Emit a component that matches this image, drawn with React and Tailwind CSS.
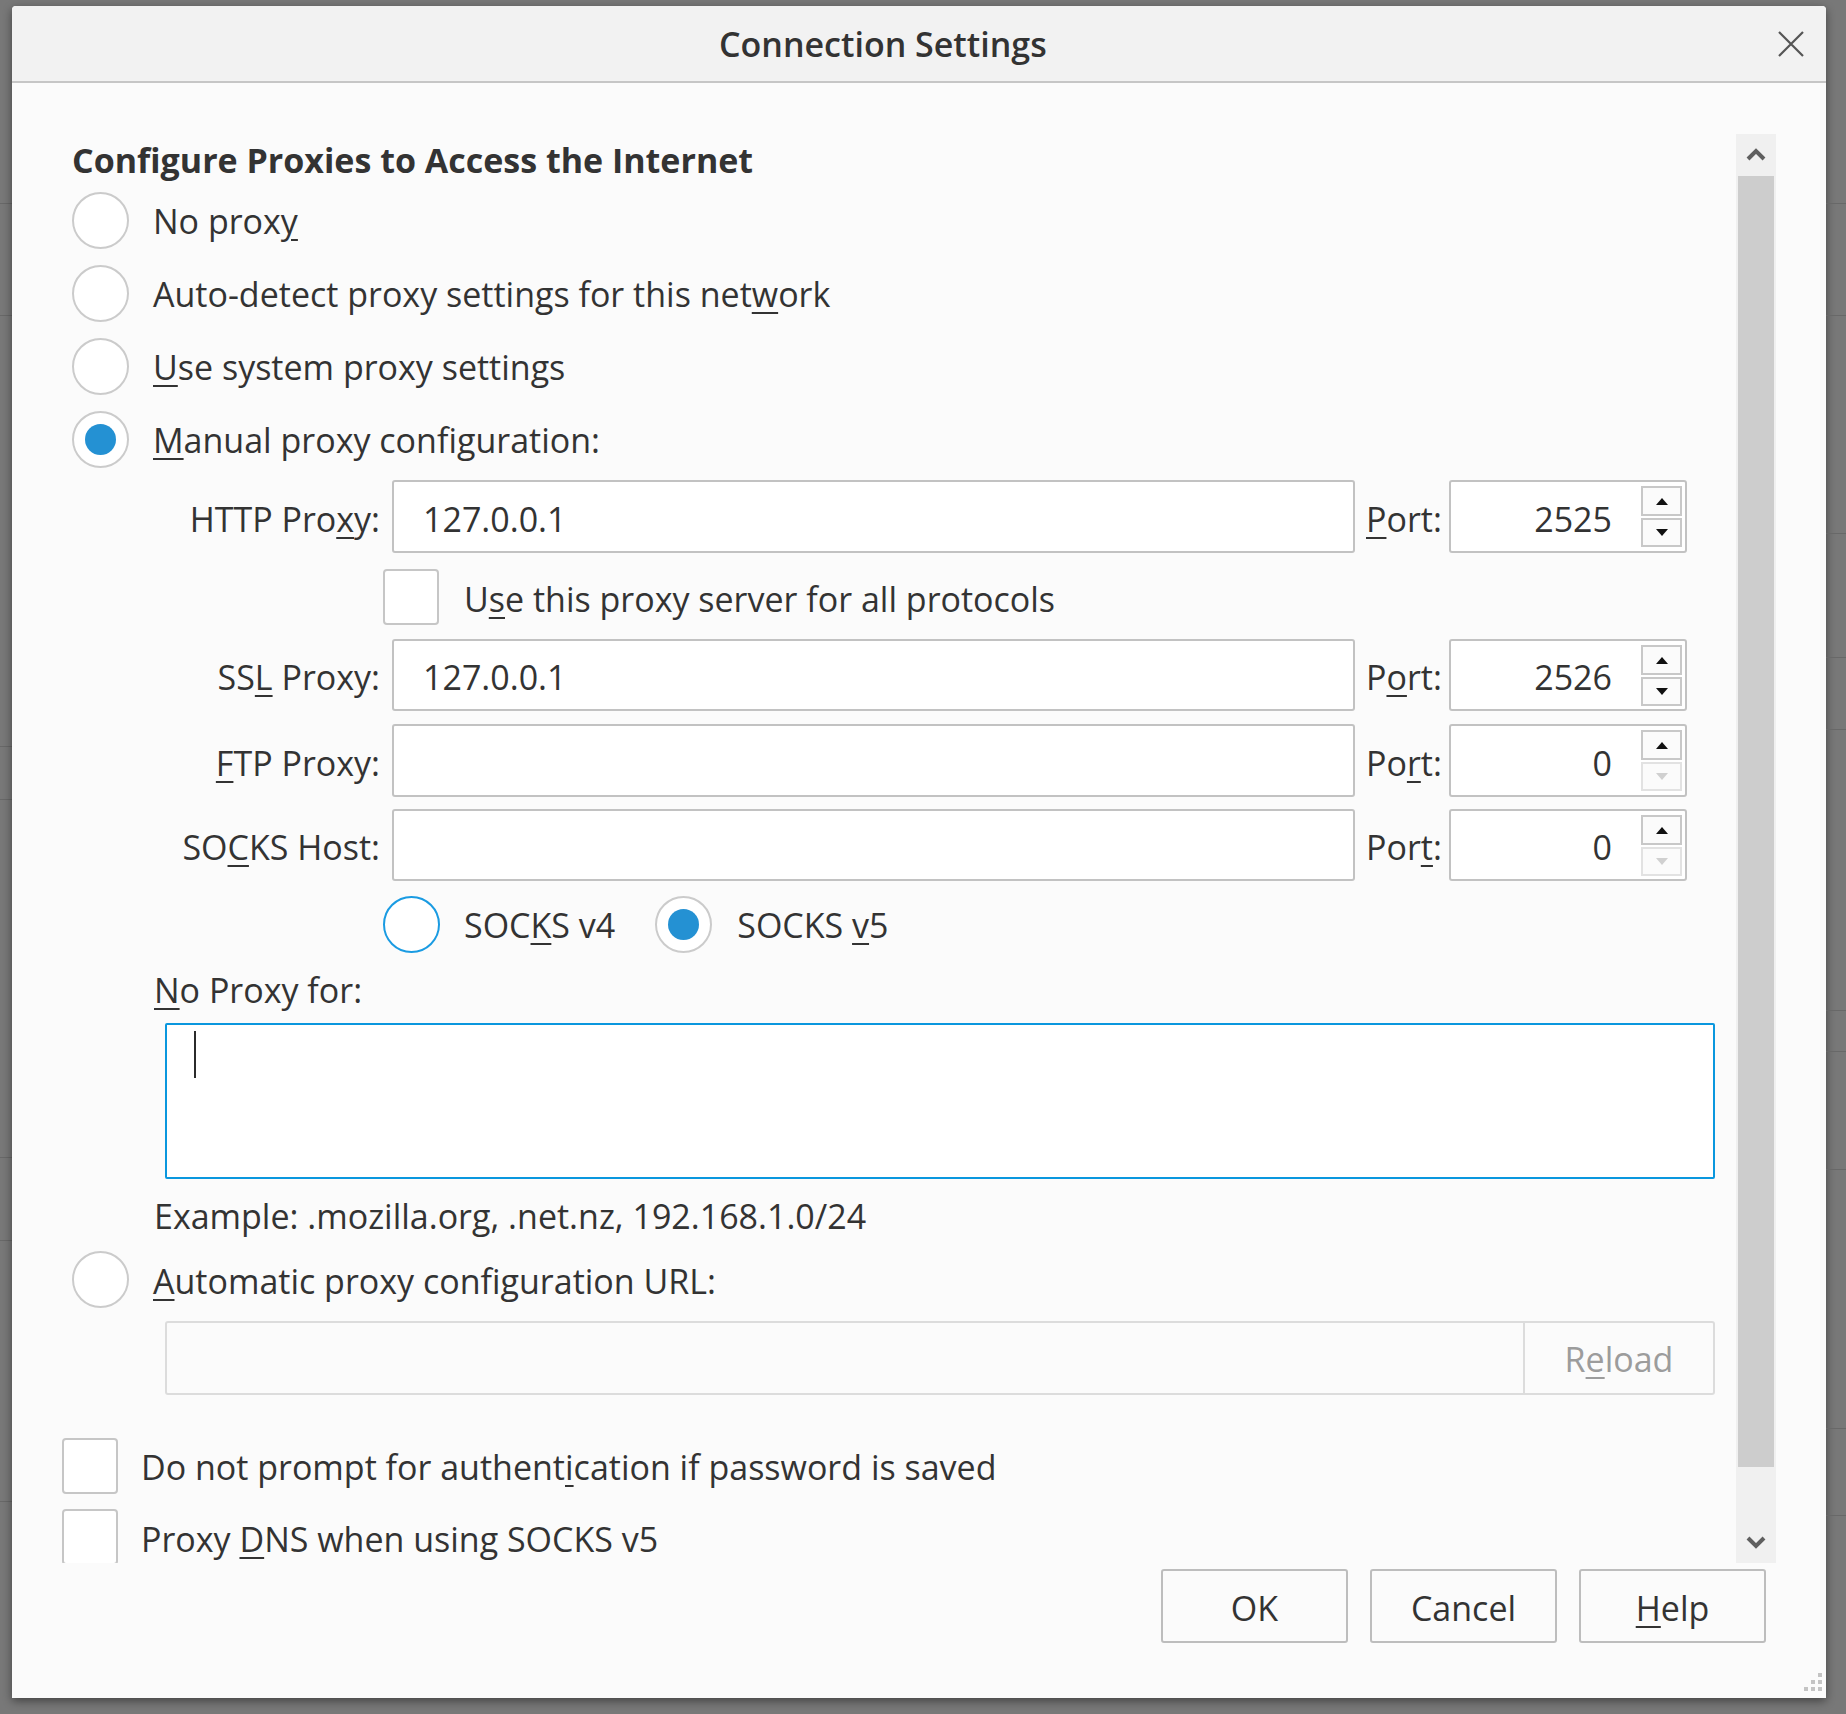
import React from "react";

// access-key letter, underlined like the Windows dialog does it
const K = ({ children }) => (
  <span className="underline decoration-2 underline-offset-[5px]">{children}</span>
);

const Radio = ({ checked, focused }) => (
  <span
    className={`flex h-[57px] w-[57px] shrink-0 items-center justify-center rounded-full border-2 bg-white ${
      focused ? "border-[#1a9be2]" : "border-[#cbcbcb]"
    }`}
  >
    {checked && <span className="h-[31px] w-[31px] rounded-full bg-[#2491d3]" />}
  </span>
);

const Checkbox = () => (
  <span className="h-[56px] w-[56px] shrink-0 rounded-[4px] border-2 border-[#c6c6c6] bg-white" />
);

const Arrow = ({ down, disabled }) => (
  <svg width="14" height="9" viewBox="0 0 14 9">
    <polygon
      points={down ? "1,1 13,1 7,8" : "1,8 13,8 7,1"}
      fill={disabled ? "#d0d0d0" : "#111"}
    />
  </svg>
);

const PortInput = ({ value, downDisabled }) => (
  <div className="ml-[10px] flex h-full w-[238px] rounded-[3px] border-2 border-[#c2c2c2] bg-white">
    <div className="flex flex-1 items-center justify-end pr-[29px] pt-[4px]">{value}</div>
    <div className="mr-[3px] mt-[4px] flex w-[41px] flex-col gap-[2px]">
      <div className="flex h-[30px] items-center justify-center border-2 border-[#c8c8c8] bg-[#fbfbfb]">
        <Arrow />
      </div>
      <div
        className={`flex h-[29px] items-center justify-center border-2 bg-[#fbfbfb] ${
          downDisabled ? "border-[#e2e2e2]" : "border-[#c8c8c8]"
        }`}
      >
        <Arrow down disabled={downDisabled} />
      </div>
    </div>
  </div>
);

const FieldRow = ({ label, value, port, portLabel, cls, downDisabled }) => (
  <div className={`flex shrink-0 items-center ${cls}`}>
    <div className="w-[318px] pt-[4px] text-right">{label}</div>
    <div className="ml-[12px] flex h-full w-[963px] items-center rounded-[3px] border-2 border-[#c2c2c2] bg-white pl-[29px] pt-[4px]">
      {value}
    </div>
    <div className="ml-[11px] w-[73px] pt-[4px]">{portLabel}</div>
    <PortInput value={port} downDisabled={downDisabled} />
  </div>
);

const RadioRow = ({ children, checked }) => (
  <div className="flex h-[73px] shrink-0 items-center pl-[10px]">
    <Radio checked={checked} />
    <span className="ml-[24px] pt-[1px]">{children}</span>
  </div>
);

const Strip = ({ lines, className }) => {
  let prev = 0;
  return (
    <div className={`flex shrink-0 flex-col ${className}`}>
      {lines.map((y) => {
        const h = y - prev;
        prev = y + 1;
        return <div key={y} style={{ height: h }} className="border-b border-[#686868]" />;
      })}
    </div>
  );
};

const Chevron = ({ down }) => (
  <svg width="22" height="16" viewBox="0 0 22 16">
    <polyline
      points={down ? "3,4 11,12 19,4" : "3,12 11,4 19,12"}
      fill="none"
      stroke="#5f5f5f"
      strokeWidth="4"
    />
  </svg>
);

export default function App() {
  return (
    <div className="flex h-[1714px] w-[1846px] overflow-hidden bg-[#787878] font-['Open_Sans',sans-serif] text-[34px] leading-none text-[#333]">
      <Strip className="w-[12px]" lines={[204, 317, 749, 803, 1162, 1246, 1508]} />

      {/* dialog */}
      <div className="mt-[6px] flex h-[1692px] w-[1814px] shrink-0 flex-col rounded-t-[4px] bg-[#fbfbfb] shadow-[0_3px_10px_rgba(0,0,0,0.45)]">
        {/* title bar */}
        <div className="flex h-[77px] shrink-0 items-center rounded-t-[4px] border-b-2 border-[#c6c6c6] bg-[#f2f2f2]">
          <span className="ml-[707px] font-semibold">Connection Settings</span>
          <span className="flex-1" />
          <svg className="mr-[22px]" width="26" height="26" viewBox="0 0 26 26">
            <path d="M1 1 L25 25 M25 1 L1 25" stroke="#555" strokeWidth="2.2" />
          </svg>
        </div>

        {/* scroll area */}
        <div className="mx-[50px] mt-[51px] flex h-[1429px] shrink-0">
          <div className="flex flex-1 flex-col overflow-hidden">
            <div className="flex h-[50px] shrink-0 items-center pl-[10px] pt-[2px] font-bold">
              Configure Proxies to Access the Internet
            </div>
            <RadioRow>
              No prox<K>y</K>
            </RadioRow>
            <RadioRow>
              Auto-detect proxy settings for this net<K>w</K>ork
            </RadioRow>
            <RadioRow>
              <K>U</K>se system proxy settings
            </RadioRow>
            <RadioRow checked>
              <K>M</K>anual proxy configuration:
            </RadioRow>

            <FieldRow
              cls="mt-[4px] h-[73px]"
              label={<>HTTP Pro<K>x</K>y:</>}
              value="127.0.0.1"
              portLabel={<><K>P</K>ort:</>}
              port="2525"
            />
            <div className="mt-[16px] flex h-[55px] shrink-0 items-center pl-[321px]">
              <Checkbox />
              <span className="ml-[25px] pt-[5px]">
                U<K>s</K>e this proxy server for all protocols
              </span>
            </div>
            <FieldRow
              cls="mt-[15px] h-[72px]"
              label={<>SS<K>L</K> Proxy:</>}
              value="127.0.0.1"
              portLabel={<>P<K>o</K>rt:</>}
              port="2526"
            />
            <FieldRow
              cls="mt-[13px] h-[73px]"
              label={<><K>F</K>TP Proxy:</>}
              value=""
              portLabel={<>Po<K>r</K>t:</>}
              port="0"
              downDisabled
            />
            <FieldRow
              cls="mt-[12px] h-[72px]"
              label={<>SO<K>C</K>KS Host:</>}
              value=""
              portLabel={<>Por<K>t</K>:</>}
              port="0"
              downDisabled
            />

            <div className="mt-[15px] flex h-[56px] shrink-0 items-center pl-[321px]">
              <Radio focused />
              <span className="ml-[24px] pt-[1px]">
                SOC<K>K</K>S v4
              </span>
              <span className="ml-[40px]">
                <Radio checked />
              </span>
              <span className="ml-[25px] pt-[1px]">
                SOCKS <K>v</K>5
              </span>
            </div>

            <div className="mt-[10px] flex h-[54px] shrink-0 items-center pl-[92px] pt-[1px]">
              <span>
                <K>N</K>o Proxy for:
              </span>
            </div>
            <div className="ml-[103px] mt-[7px] h-[156px] w-[1550px] shrink-0 rounded-[2px] border-2 border-[#0a97de] bg-white pl-[27px] pt-[6px]">
              <div className="h-[47px] w-[2px] bg-[#2b2b2b]" />
            </div>
            <div className="mt-[9px] flex h-[54px] shrink-0 items-center pl-[92px] pt-[1px]">
              Example: .mozilla.org, .net.nz, 192.168.1.0/24
            </div>

            <div className="mt-[9px] flex h-[56px] shrink-0 items-center pl-[10px]">
              <Radio />
              <span className="ml-[24px] pt-[3px]">
                <K>A</K>utomatic proxy configuration URL:
              </span>
            </div>
            <div className="ml-[103px] mt-[14px] flex h-[74px] w-[1550px] shrink-0 rounded-[3px] border-2 border-[#dcdcdc] bg-[#fbfbfb]">
              <div className="flex-1" />
              <div className="flex w-[190px] items-center justify-center border-l-2 border-[#dcdcdc] pt-[1px] text-[#9c9c9c]">
                <span>
                  R<K>e</K>load
                </span>
              </div>
            </div>

            <div className="mt-[42px] flex h-[57px] shrink-0 items-center">
              <Checkbox />
              <span className="ml-[23px] pt-[3px]">
                Do not prompt for authent<K>i</K>cation if password is saved
              </span>
            </div>
            <div className="mt-[14px] flex h-[57px] shrink-0 items-center">
              <Checkbox />
              <span className="ml-[23px] pt-[5px]">
                Proxy <K>D</K>NS when using SOCKS v5
              </span>
            </div>
          </div>

          {/* scrollbar */}
          <div className="flex w-[40px] shrink-0 flex-col bg-[#f0f0f0]">
            <div className="flex h-[42px] shrink-0 items-center justify-center">
              <Chevron />
            </div>
            <div className="mx-[2px] h-[1291px] shrink-0 bg-[#cdcdcd]" />
            <div className="flex-1" />
            <div className="flex h-[42px] shrink-0 items-center justify-center">
              <Chevron down />
            </div>
          </div>
        </div>

        {/* buttons */}
        <div className="mt-[6px] flex h-[74px] shrink-0 justify-end gap-[22px] pr-[60px]">
          {[
            ["OK"],
            ["Cancel"],
            [<><K>H</K>elp</>],
          ].map(([t], i) => (
            <div
              key={i}
              className="flex w-[187px] items-center justify-center rounded-[3px] border-2 border-[#bdbdbd] bg-[#fbfbfb] pt-[3px]"
            >
              <span>{t}</span>
            </div>
          ))}
        </div>

        {/* resize grip */}
        <div className="flex flex-1 items-end justify-end pb-[4px] pr-[3px]">
          <svg width="22" height="22" viewBox="0 0 22 22">
            {[
              [17, 1],
              [17, 8],
              [10, 8],
              [17, 15],
              [10, 15],
              [3, 15],
            ].map(([x, y]) => (
              <rect key={`${x}-${y}`} x={x} y={y} width="4" height="4" fill="#c4c4c4" />
            ))}
          </svg>
        </div>
      </div>

      <Strip
        className="w-[20px]"
        lines={[204, 317, 536, 661, 734, 1016, 1058, 1177, 1437, 1525]}
      />
    </div>
  );
}
